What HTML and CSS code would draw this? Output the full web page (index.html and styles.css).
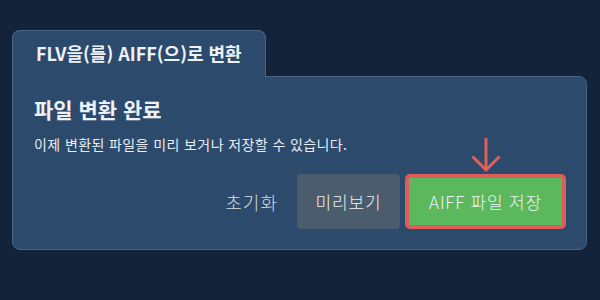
FILE: index.html
```html
<!DOCTYPE html>
<html lang="ko">
<head>
  <meta charset="UTF-8">
  <title>FLV to AIFF</title>
  <link rel="stylesheet" href="styles.css">
</head>
<body>
  <div class="tab">FLV을(를) AIFF(으)로 변환</div>
  <div class="panel">
    <h2>파일 변환 완료</h2>
    <p class="desc">이제 변환된 파일을 미리 보거나 저장할 수 있습니다.</p>
    <div class="actions">
      <button class="btn reset">초기화</button>
      <button class="btn preview">미리보기</button>
      <button class="btn save">
        AIFF 파일 저장
        <svg class="arrow" width="30" height="36" viewBox="0 0 30 36">
          <path d="M15 1 V33 M1.5 19.5 L15 33 L28.5 19.5" fill="none" stroke="#e0605a" stroke-width="3"/>
        </svg>
      </button>
    </div>
  </div>
</body>
</html>
```

FILE: styles.css
```css
body {
  margin: 0;
  padding: 30px 13px 0 12px;
  background: #12233a;
  font-family: "Noto Sans CJK KR", "Noto Sans", sans-serif;
  color: #eef2f6;
}
.tab {
  position: relative;
  z-index: 1;
  box-sizing: border-box;
  width: 254px;
  height: 47px;
  margin-bottom: -1px;
  padding: 0 0 0 23px;
  line-height: 45px;
  font-size: 18px;
  font-weight: bold;
  background: #2c4a6b;
  border: 1px solid #4b6585;
  border-bottom: none;
  border-radius: 8px 8px 0 0;
}
.panel {
  box-sizing: border-box;
  height: 174px;
  padding: 17px 20px 20px 21px;
  background: #2c4a6b;
  border: 1px solid #4b6585;
  border-radius: 0 8px 8px 8px;
}
h2 {
  margin: 0;
  font-size: 21px;
  line-height: 30px;
  font-weight: bold;
}
.desc {
  margin: 10px 0 0;
  font-size: 14px;
  letter-spacing: 0.4px;
  line-height: 20px;
  color: #e8eef4;
}
.actions {
  display: flex;
  justify-content: flex-end;
  align-items: center;
  gap: 5px;
  margin-top: 20px;
}
.btn {
  position: relative;
  box-sizing: border-box;
  height: 55px;
  padding: 0 16px;
  border: none;
  border-radius: 4px;
  font-family: inherit;
  font-size: 17px;
  font-weight: 300;
  letter-spacing: 0.8px;
  color: #eef2f6;
  background: transparent;
}
.reset {
  padding: 0 14px;
  font-size: 18px;
  letter-spacing: 1px;
  color: #d4dbe3;
}
.preview {
  width: 103px;
  background: #4b5c6d;
}
.save {
  width: 161px;
  background: #5cb85c;
  border: 4px solid #e05c5a;
  border-radius: 5px;
}
.arrow {
  position: absolute;
  left: 50%;
  top: -41px;
  margin-left: -15px;
}
```
